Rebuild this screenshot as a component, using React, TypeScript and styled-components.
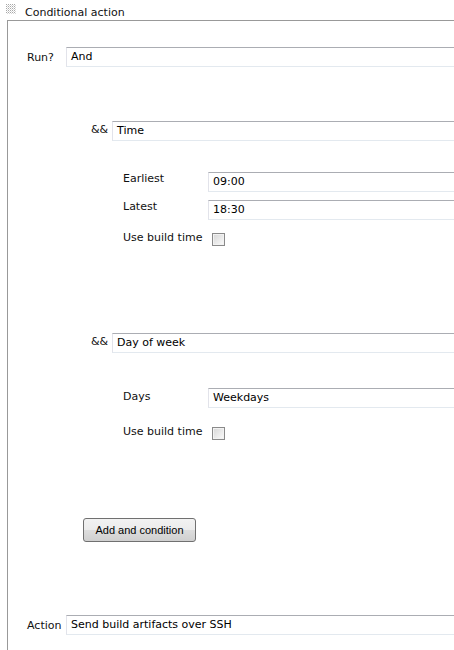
import React from "react";
import styled, { createGlobalStyle } from "styled-components";

const Global = createGlobalStyle`
  html, body {
    margin: 0;
    padding: 0;
    background: #ffffff;
    overflow: hidden;
  }
  body {
    font-family: "DejaVu Sans", Verdana, sans-serif;
    font-size: 11px;
    color: #000000;
  }
`;

const Page = styled.div`
  width: 100%;
  height: 650px;
  display: flex;
  flex-direction: column;
`;

const Header = styled.div`
  height: 20px;
  box-sizing: border-box;
  padding: 4px 0 0 6px;
  display: flex;
  align-items: flex-start;
  gap: 9px;
`;

const Title = styled.div`
  line-height: 13px;
  margin-top: 2px;
  color: #111111;
`;

const Section = styled.div`
  flex: 1;
  margin-left: 7px;
  border-left: 1px solid #999999;
  border-top: 1px solid #999999;
  padding-left: 19px;
  display: flex;
  flex-direction: column;
`;

const Row = styled.div<{ $top: number }>`
  margin-top: ${(p) => p.$top}px;
  display: flex;
  align-items: center;
`;

const RowLabel = styled.div`
  width: 39px;
  flex: none;
  line-height: 13px;
  color: #111111;
`;

const Field = styled.div`
  flex: 1;
  min-width: 0;
  height: 20px;
  box-sizing: border-box;
  border: 1px solid;
  border-right: none;
  border-color: #abadb3 #dbdfe6 #e3e9ef #e2e3ea;
  padding: 0 4px;
  line-height: 18px;
  white-space: nowrap;
  overflow: hidden;
  background: #ffffff;
  color: #000000;
`;

const Block = styled.div<{ $top: number }>`
  margin-top: ${(p) => p.$top}px;
  padding-left: 64px;
  display: flex;
  flex-direction: column;
`;

const BlockHead = styled.div`
  display: flex;
  align-items: center;
`;

const Amp = styled.div`
  width: 21px;
  flex: none;
  line-height: 13px;
  margin-top: -3px;
  color: #111111;
`;

const FieldGrid = styled.div<{ $top: number; $gap: number }>`
  margin-top: ${(p) => p.$top}px;
  padding-left: 32px;
  display: grid;
  grid-template-columns: 85px 1fr;
  row-gap: ${(p) => p.$gap}px;
`;

const GridLabel = styled.div<{ $pad: number }>`
  line-height: 13px;
  padding-top: ${(p) => p.$pad}px;
  color: #111111;
`;

const CheckCell = styled.div`
  height: 20px;
  display: flex;
  align-items: flex-start;
`;

const Checkbox = styled.span`
  display: block;
  width: 13px;
  height: 13px;
  box-sizing: border-box;
  margin: 5px 0 0 4px;
  border: 1px solid #8a8a8a;
  background: linear-gradient(135deg, #d6d6d6 0%, #ececec 60%, #fbfbfb 100%);
  box-shadow: inset 0 0 0 1px #f2f2f2;
`;

const ButtonRow = styled.div`
  margin-top: 76px;
  padding-left: 56px;
  display: flex;
`;

const Button = styled.button`
  width: 113px;
  height: 24px;
  box-sizing: border-box;
  border: 1px solid #707070;
  border-radius: 3px;
  background: linear-gradient(#f2f2f2 0%, #ebebeb 50%, #dddddd 51%, #cfcfcf 100%);
  font-family: "Liberation Sans", Arial, sans-serif;
  font-size: 11px;
  color: #000000;
  padding: 0;
  line-height: 22px;
`;

const Grip = () => {
  const dots: React.ReactElement[] = [];
  for (let y = 0; y < 10; y += 2) {
    for (let x = 0; x < 10; x += 2) {
      dots.push(<rect key={`${x}-${y}`} x={x} y={y} width={1} height={1} fill="#a8a8a8" />);
      dots.push(<rect key={`b${x}-${y}`} x={x + 1} y={y + 1} width={1} height={1} fill="#d8d8d8" />);
    }
  }
  return (
    <svg width="10" height="10" viewBox="0 0 10 10" style={{ display: "block", flex: "none" }}>
      {dots}
    </svg>
  );
};

export default function App() {
  return (
    <>
      <Global />
      <Page>
        <Header>
          <Grip />
          <Title>Conditional action</Title>
        </Header>
        <Section>
          <Row $top={26}>
            <RowLabel>Run?</RowLabel>
            <Field>And</Field>
          </Row>

          <Block $top={54}>
            <BlockHead>
              <Amp>&amp;&amp;</Amp>
              <Field>Time</Field>
            </BlockHead>
            <FieldGrid $top={31} $gap={8}>
              <GridLabel $pad={0}>Earliest</GridLabel>
              <Field>09:00</Field>
              <GridLabel $pad={0}>Latest</GridLabel>
              <Field>18:30</Field>
              <GridLabel $pad={3}>Use build time</GridLabel>
              <CheckCell>
                <Checkbox />
              </CheckCell>
            </FieldGrid>
          </Block>

          <Block $top={85}>
            <BlockHead>
              <Amp>&amp;&amp;</Amp>
              <Field>Day of week</Field>
            </BlockHead>
            <FieldGrid $top={35} $gap={14}>
              <GridLabel $pad={2}>Days</GridLabel>
              <Field>Weekdays</Field>
              <GridLabel $pad={3}>Use build time</GridLabel>
              <CheckCell>
                <Checkbox />
              </CheckCell>
            </FieldGrid>
          </Block>

          <ButtonRow>
            <Button type="button">Add and condition</Button>
          </ButtonRow>

          <Row $top={73}>
            <RowLabel>Action</RowLabel>
            <Field>Send build artifacts over SSH</Field>
          </Row>
        </Section>
      </Page>
    </>
  );
}
